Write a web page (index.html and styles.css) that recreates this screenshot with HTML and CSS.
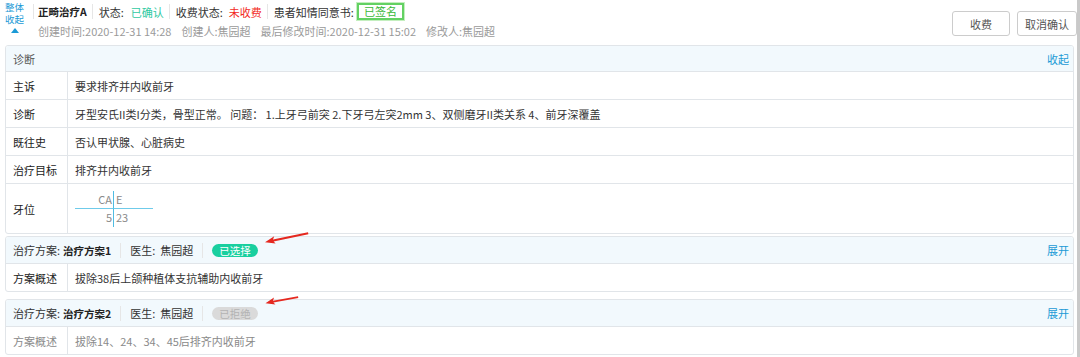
FILE: index.html
```html
<!DOCTYPE html>
<html lang="zh-CN">
<head>
<meta charset="utf-8">
<title>正畸治疗</title>
<link rel="stylesheet" href="styles.css">
</head>
<body>
<div class="page">
  <div class="topbar">
    <div class="collapse-all">
      <span>整体</span><span>收起</span>
      <i class="tri"></i>
    </div>
    <div class="info">
      <div class="line1">
        <span class="item title">正畸治疗A</span>
        <span class="item">状态:<em class="ok">已确认</em></span>
        <span class="item">收费状态:<em class="red">未收费</em></span>
        <span class="item">患者知情同意书:<b class="signed">已签名</b></span>
      </div>
      <div class="line2">
        <span>创建时间:2020-12-31 14:28</span>
        <span>创建人:焦园超</span>
        <span>最后修改时间:2020-12-31 15:02</span>
        <span>修改人:焦园超</span>
      </div>
    </div>
    <div class="actions">
      <button class="btn btn-fee">收费</button>
      <button class="btn btn-cancel">取消确认</button>
    </div>
  </div>

  <div class="panel diag">
    <div class="phead">
      <span class="ptitle">诊断</span>
      <a class="link">收起</a>
    </div>
    <div class="row"><div class="lab">主诉</div><div class="val">要求排齐并内收前牙</div></div>
    <div class="row"><div class="lab">诊断</div><div class="val">牙型安氏II类I分类，骨型正常。 问题： 1.上牙弓前突 2.下牙弓左突2mm 3、双侧磨牙II类关系 4、前牙深覆盖</div></div>
    <div class="row"><div class="lab">既往史</div><div class="val">否认甲状腺、心脏病史</div></div>
    <div class="row"><div class="lab">治疗目标</div><div class="val">排齐并内收前牙</div></div>
    <div class="row tall"><div class="lab">牙位</div><div class="val">
      <div class="teeth">
        <span class="q ul">CA</span><span class="q ur">E</span>
        <span class="q ll">5</span><span class="q lr">23</span>
      </div>
    </div></div>
  </div>

  <div class="panel plan">
    <div class="phead">
      <div class="pinfo">
        <span class="pitem">治疗方案:<b>治疗方案1</b></span>
        <span class="pitem">医生:<span class="doc">焦园超</span></span>
        <span class="pitem"><span class="tag tag-on">已选择</span></span>
      </div>
      <a class="link">展开</a>
    </div>
    <div class="row"><div class="lab">方案概述</div><div class="val">拔除38后上颌种植体支抗辅助内收前牙</div></div>
  </div>

  <div class="panel plan muted">
    <div class="phead">
      <div class="pinfo">
        <span class="pitem">治疗方案:<b>治疗方案2</b></span>
        <span class="pitem">医生:<span class="doc">焦园超</span></span>
        <span class="pitem"><span class="tag tag-off">已拒绝</span></span>
      </div>
      <a class="link">展开</a>
    </div>
    <div class="row"><div class="lab">方案概述</div><div class="val">拔除14、24、34、45后排齐内收前牙</div></div>
  </div>

  <div class="footbtns">
    <span class="fb w88"></span><span class="fb w57"></span><span class="fb w59"></span><span class="fb w89"></span><span class="fb w57"></span><span class="fb w78"></span><span class="fb w59"></span>
  </div>

  <svg class="arrows" width="1080" height="357" viewBox="0 0 1080 357" aria-hidden="true">
    <path d="M308 232.2 L273 239.6 L274.2 236.2 L265 242.2 L275.6 243.6 L273.6 241.4 L308.4 234.2 Z" fill="#e5281f"/>
    <path d="M298 296.2 L273 300.8 L274 297.6 L265.5 303.2 L275.4 304.6 L273.4 302.6 L298.3 298.1 Z" fill="#e5281f"/>
  </svg>
</div>
</body>
</html>
```

FILE: styles.css
```css
* { box-sizing: border-box; }
html, body {
  margin: 0;
  padding: 0;
  background: #fff;
}
body {
  width: 1080px;
  height: 357px;
  overflow: hidden;
  font-family: "Noto Sans CJK SC", "Liberation Sans", sans-serif;
  font-size: 11px;
  color: #333;
}
.page {
  position: relative;
  width: 1080px;
  height: 357px;
  overflow: hidden;
  padding: 0 3px 0 5px;
  border-right: 3px solid #c9c9c9;
}
em, b { font-style: normal; }

/* top bar */
.topbar {
  display: flex;
  height: 45px;
}
.collapse-all {
  width: 28px;
  display: flex;
  flex-direction: column;
  align-items: flex-start;
  padding-top: 0;
  color: #1b9ad6;
  font-size: 9.5px;
  line-height: 14px;
}
.collapse-all span { display: block; height: 12px; }
.collapse-all span + span { margin-top: 0; }
.collapse-all .tri {
  margin: 4px 0 0 6px;
  width: 0;
  height: 0;
  border-left: 4px solid transparent;
  border-right: 4px solid transparent;
  border-bottom: 5px solid #1b9ad6;
}
.info {
  flex: 1;
  display: flex;
  flex-direction: column;
}
.line1 {
  display: flex;
  align-items: center;
  height: 22px;
  padding-top: 1px;
}
.line1 .item {
  display: flex;
  align-items: center;
  height: 15px;
  padding: 0 5px 0 6px;
  border-left: 1px solid #e6e6e6;
  white-space: nowrap;
}
.line1 .item.title {
  padding-left: 4px;
  font-weight: bold;
  font-size: 10.5px;
  color: #222;
}
.ok { color: #2fc9a2; margin-left: 7px; }
.red { color: #f22a1e; margin-left: 6px; }
.signed {
  margin-left: 3px;
  font-weight: normal;
  color: #39b739;
  border: 2px solid #63d163;
  box-shadow: 0 0 0 1px #c4efbf;
  padding: 0 5px;
  line-height: 13px;
  height: 17px;
}
.line2 {
  display: flex;
  gap: 10px;
  padding-left: 5px;
  margin-top: 1px;
  color: #9a9a9a;
  white-space: nowrap;
}
.actions {
  display: flex;
  gap: 7px;
  padding-top: 11px;
  margin-right: -3px;
}
.btn {
  height: 25px;
  padding: 0;
  border: 1px solid #ccc;
  border-radius: 3px;
  background: #fff;
  font-family: inherit;
  font-size: 11px;
  color: #555;
}
.btn-fee { width: 58px; }
.btn-cancel { width: 60px; }

/* panels */
.panel {
  border: 1px solid #e1e5e9;
  border-radius: 3px;
  overflow: hidden;
}
.phead {
  display: flex;
  align-items: center;
  justify-content: space-between;
  height: 25px;
  padding: 0 4px 0 7px;
  background: #f2f9fd;
}
.ptitle { color: #555; }
.link { color: #1b9ad6; cursor: pointer; }
.row {
  display: flex;
  height: 28px;
  border-top: 1px solid #e1e5e9;
}
.row.tall { height: 50px; }
.lab {
  width: 62px;
  flex: none;
  display: flex;
  align-items: center;
  padding-left: 7px;
  border-right: 1px solid #e1e5e9;
  color: #222;
}
.val {
  display: flex;
  align-items: center;
  padding-left: 7px;
  white-space: nowrap;
}

/* tooth chart */
.teeth {
  display: grid;
  grid-template-columns: 39px 39px;
  grid-template-rows: 18px 18px;
  color: #8a8a8a;
  line-height: 17px;
}
.q { display: block; }
.ul, .ll {
  text-align: right;
  padding-right: 1px;
  border-right: 1px solid #4fbce2;
}
.ur, .lr { padding-left: 2px; }
.ul, .ur { border-bottom: 1px solid #6fcbea; }

/* plans */
.diag { margin-bottom: 2px; }
.plan { margin-bottom: 7px; }
.plan .phead { height: 26px; }
.plan .row { height: 28px; }
.pinfo { display: flex; align-items: center; }
.pitem {
  display: flex;
  align-items: center;
  height: 15px;
  padding: 0 9px;
  border-left: 1px solid #e6e6e6;
  white-space: nowrap;
}
.pitem:first-child { padding-left: 0; border-left: 0; }
.pitem b { font-weight: bold; font-size: 10.5px; color: #222; margin-left: 3px; }
.doc { margin-left: 5px; }
.tag {
  display: inline-block;
  height: 13px;
  line-height: 13px;
  padding: 0 7px;
  border-radius: 7px;
  font-size: 10.5px;
}
.tag-on { background: #19cf9f; color: #fff; }
.tag-off { background: #dadada; color: #b3b3b3; }
.muted .row .lab, .muted .row .val { color: #8a8a8a; }

/* bottom buttons peeking */
.footbtns {
  display: flex;
  justify-content: flex-end;
  gap: 9px;
  margin-top: -5px;
  margin-right: -3px;
}
.fb {
  flex: none;
  height: 24px;
  border: 1px solid #c8cdd2;
  border-radius: 3px;
}
.w88 { width: 88px; }
.w57 { width: 57px; }
.w59 { width: 59px; }
.w89 { width: 89px; }
.w78 { width: 78px; }

.arrows {
  position: absolute;
  left: 0;
  top: 0;
  pointer-events: none;
}
```
